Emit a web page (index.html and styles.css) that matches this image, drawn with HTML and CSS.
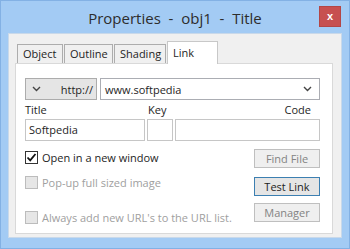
FILE: index.html
```html
<!DOCTYPE html>
<html lang="en">
<head>
    <meta charset="UTF-8">
    <title>Properties - obj1 - Title</title>
    <link rel="stylesheet" href="styles.css">
</head>
<body>
    <div class="window">
        <div class="titlebar">
            <span class="title">Properties&nbsp; - &nbsp;obj1&nbsp; - &nbsp;Title</span>
            <button class="close-button">x</button>
        </div>

        <div class="client">
            <div class="tabs">
                <div class="tab tab-object">Object</div>
                <div class="tab tab-outline">Outline</div>
                <div class="tab tab-shading">Shading</div>
                <div class="tab active">Link</div>
            </div>

            <div class="panel">
                <div class="url-row">
                    <button class="scheme-button">
                        <svg class="chevron" width="9" height="6" viewBox="0 0 9 6"><polyline points="1,1 4.5,4.5 8,1" fill="none" stroke="#444" stroke-width="1.4"/></svg>
                        <span>http://</span>
                    </button>
                    <div class="url-combo">
                        <span>www.softpedia</span>
                        <svg class="chevron" width="9" height="6" viewBox="0 0 9 6"><polyline points="1,1 4.5,4.5 8,1" fill="none" stroke="#444" stroke-width="1.4"/></svg>
                    </div>
                </div>

                <div class="field-labels">
                    <span class="label-title">Title</span>
                    <span class="label-key">Key</span>
                    <span class="label-code">Code</span>
                </div>
                <div class="fields">
                    <div class="input title-input">Softpedia</div>
                    <div class="input key-input"></div>
                    <div class="input code-input"></div>
                </div>

                <div class="options">
                    <div class="checks">
                        <label class="check-row">
                            <span class="checkbox checked">
                                <svg width="11" height="11" viewBox="0 0 11 11"><polyline points="1.5,5.5 4.2,8.3 9.5,2" fill="none" stroke="#111" stroke-width="1.8"/></svg>
                            </span>
                            Open in a new window
                        </label>
                        <label class="check-row disabled second">
                            <span class="checkbox"></span>
                            Pop-up full sized image
                        </label>
                        <label class="check-row disabled third">
                            <span class="checkbox"></span>
                            Always add new URL's to the URL list.
                        </label>
                    </div>
                    <div class="buttons">
                        <button class="action-button" disabled>Find File</button>
                        <button class="action-button default">Test Link</button>
                        <button class="action-button" disabled>Manager</button>
                    </div>
                </div>
            </div>
        </div>
    </div>
</body>
</html>
```

FILE: styles.css
```css
body {
    margin: 0;
    font-family: "Open Sans", "Noto Sans", sans-serif;
    font-size: 11px;
    color: #1e1e1e;
    background-color: #a3cbf4;
}
.window {
    width: 350px;
    height: 249px;
    box-sizing: border-box;
    border: 1px solid #83b1e4;
    background-color: #a3cbf4;
    overflow: hidden;
}
.titlebar {
    height: 32px;
    position: relative;
    display: flex;
    align-items: center;
    justify-content: center;
}
.title {
    font-size: 15px;
    color: #2d2d2d;
    margin-top: 1px;
}
.close-button {
    position: absolute;
    right: 8px;
    top: 5px;
    width: 22px;
    height: 21px;
    padding: 0;
    border: 1px solid #b34646;
    background-color: #c75050;
    color: white;
    font-family: "Liberation Sans", sans-serif;
    font-size: 11px;
    font-weight: bold;
    line-height: 17px;
}
.client {
    margin: 0 7px 0 7px;
    height: 205px;
    box-sizing: border-box;
    background-color: #f0f0f0;
    border: 1px solid #c9d9ea;
    padding: 0 8px 0 6px;
}
.tabs {
    display: flex;
    align-items: flex-end;
    padding: 7px 0 0 2px;
    height: 22px;
    position: relative;
    z-index: 1;
}
.tab {
    height: 19px;
    box-sizing: border-box;
    padding: 0 5px;
    margin-right: 1px;
    border: 1px solid #adadad;
    border-bottom: none;
    background-color: #f0f0f0;
    line-height: 18px;
    white-space: nowrap;
}
.tab-object {
    width: 46px;
}
.tab-outline {
    width: 49px;
}
.tab-shading {
    width: 52px;
}
.tab.active {
    height: 23px;
    width: 51px;
    padding: 0 5px;
    background-color: white;
    border-color: #c8c8c8;
    margin-bottom: -1px;
    line-height: 21px;
}
.panel {
    height: 171px;
    box-sizing: border-box;
    background-color: white;
    border: 1px solid #d9d9d9;
    padding: 14px 12px 0 9px;
}
.url-row {
    display: flex;
    gap: 3px;
    height: 22px;
}
.scheme-button {
    width: 72px;
    height: 22px;
    box-sizing: border-box;
    display: flex;
    align-items: center;
    justify-content: space-between;
    padding: 0 3px 0 6px;
    border: 1px solid #acacac;
    background-color: #e5e5e5;
    font: inherit;
    color: #1e1e1e;
}
.url-combo {
    flex: 1;
    height: 22px;
    box-sizing: border-box;
    display: flex;
    align-items: center;
    justify-content: space-between;
    padding: 0 7px 0 4px;
    border: 1px solid #abadb3;
}
.field-labels {
    display: flex;
    height: 19px;
    line-height: 20px;
}
.label-title {
    width: 123px;
}
.label-key {
    width: 27px;
}
.label-code {
    flex: 1;
    text-align: right;
    padding-right: 9px;
}
.fields {
    display: flex;
    gap: 2px;
    height: 22px;
}
.input {
    height: 22px;
    box-sizing: border-box;
    border: 1px solid #c6c6c6;
    padding: 0 3px;
    line-height: 20px;
}
.title-input {
    width: 120px;
}
.key-input {
    width: 26px;
}
.code-input {
    flex: 1;
}
.options {
    display: flex;
    justify-content: space-between;
}
.checks {
    padding-top: 6px;
}
.check-row {
    display: flex;
    align-items: center;
    height: 20px;
    gap: 4px;
    white-space: nowrap;
}
.check-row.second {
    margin-top: 5px;
}
.check-row.third {
    margin-top: 15px;
}
.check-row.disabled {
    color: #a0a0a0;
}
.checkbox {
    width: 13px;
    height: 13px;
    box-sizing: border-box;
    border: 1px solid #333;
    background-color: white;
    display: flex;
    align-items: center;
    justify-content: center;
}
.check-row.disabled .checkbox {
    border-color: #bcbcbc;
    background-color: #e6e6e6;
}
.buttons {
    display: flex;
    flex-direction: column;
    padding-top: 8px;
    gap: 9px;
}
.action-button {
    width: 66px;
    height: 19px;
    padding: 0;
    box-sizing: border-box;
    border: 1px solid #bfbfbf;
    background-color: #efefef;
    font: inherit;
    color: #838383;
}
.action-button.default {
    border-color: #3c7fb1;
    background-color: #e5e5e5;
    color: #1e1e1e;
}
.action-button + .action-button + .action-button {
    margin-top: -2px;
}
```
